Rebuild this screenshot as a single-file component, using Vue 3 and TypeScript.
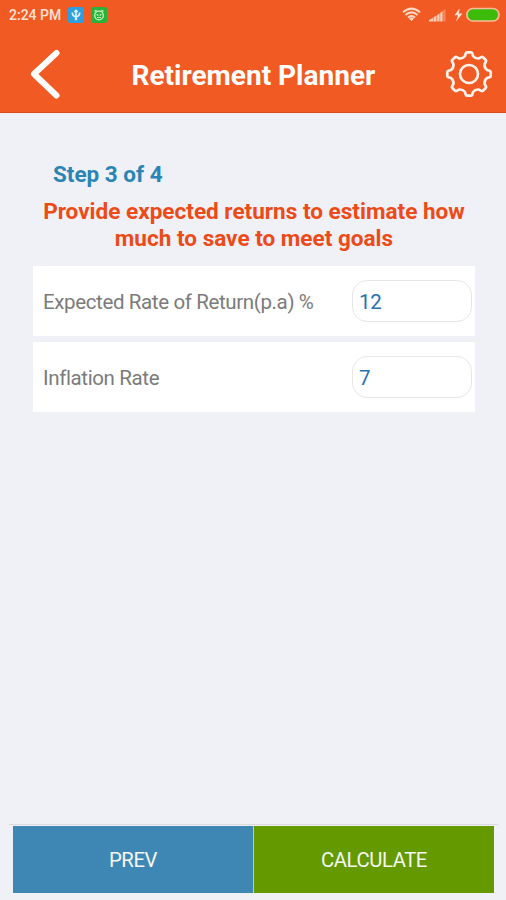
<script setup lang="ts">
import { ref } from 'vue'

interface Field {
  id: string
  label: string
  value: string
}

const fields = ref<Field[]>([
  { id: 'return', label: 'Expected Rate of Return(p.a) %', value: '12' },
  { id: 'inflation', label: 'Inflation Rate', value: '7' },
])

function point(x: number, y: number, turn: number): string {
  const a = (turn * Math.PI) / 4
  const px = x * Math.cos(a) - y * Math.sin(a)
  const py = x * Math.sin(a) + y * Math.cos(a)
  return `${px.toFixed(2)} ${py.toFixed(2)}`
}

// Outline of an eight-toothed cog centred on the origin
const gearPath =
  Array.from({ length: 8 }, (_, i) =>
    [
      `${i ? 'L' : 'M'}${point(-4, -18, i)}`,
      `L${point(-3.3, -20.6, i)}`,
      `Q${point(-3, -21.7, i)} ${point(-2, -21.7, i)}`,
      `L${point(2, -21.7, i)}`,
      `Q${point(3, -21.7, i)} ${point(3.3, -20.6, i)}`,
      `L${point(4, -18, i)}`,
      `Q${point(6.2, -15.2, i)} ${point(-4, -18, i + 1)}`,
    ].join(' '),
  ).join(' ') + 'Z'
</script>

<template>
  <div class="screen">
    <header class="top">
      <div class="status">
        <span class="time">2:24 PM</span>
        <svg class="badge" viewBox="0 0 16 16">
          <rect width="16" height="16" rx="2.5" fill="#2b9fe0" />
          <path d="M4.300 5.500Q4.300 9 8 10Q11.700 9 11.700 5.500M8 12.500V4.500M6.300 5L8 3.400 9.700 5" fill="none" stroke="#dff2ff" stroke-width="1.700" />
          <circle cx="8" cy="12" r="1.300" fill="#e9f6ff" />
        </svg>
        <svg class="badge second" viewBox="0 0 16 16">
          <rect width="16" height="16" rx="2.5" fill="#27b33a" />
          <circle cx="8" cy="8.500" r="4.300" fill="none" stroke="#c8f3bd" stroke-width="1.300" />
          <path d="M3.500 4.500L5.500 3M12.500 4.500L10.500 3M5.700 7.200l1.600 1.300M10.300 7.200L8.700 8.500M6 10.500h4" stroke="#c8f3bd" stroke-width="1.200" />
        </svg>
        <span class="grow"></span>
        <svg class="indicators" viewBox="0 0 100 18">
          <g fill="none" stroke="#ffd9c6" stroke-width="2">
            <path d="M3 6.200Q11.500 -1 20 6.200" />
            <path d="M5.500 9Q11.500 3.800 17.500 9" />
            <path d="M8 11.600Q11.500 8.600 15 11.600" />
          </g>
          <path d="M9 12.500Q11.500 10.800 14 12.500L11.500 15.200z" fill="#ffd9c6" />
          <g fill="#ffd0b8">
            <path d="M29 15.500v-1.500l4-2v3.500zM33.500 15.500v-4.200l3-1.700v5.900zM37.200 15.500V9.100l2.400-1.700v8.100zM40.200 15.500V6.900L42.600 5v10.500z" />
            <path d="M43.200 15.500V4.600L45.500 3v12.500z" opacity=".4" />
          </g>
          <path d="M59.500 2.500L54.500 9.200h3.500L56 15.500 62.500 7.500H59z" fill="#ffe0d0" />
          <rect x="66.900" y="2.500" width="32" height="12.500" rx="6" fill="#3dbb0b" stroke="#ffb998" stroke-width="1.700" />
        </svg>
      </div>
      <div class="bar">
        <button class="icon-btn back" aria-label="Back">
          <svg viewBox="0 0 32 52"><path d="M27.500 5L5 26 27.500 47.500" fill="none" stroke="#fff" stroke-width="6" stroke-linecap="round" stroke-linejoin="round" /></svg>
        </button>
        <h1>Retirement Planner</h1>
        <button class="icon-btn gear" aria-label="Settings">
          <svg viewBox="-24 -24 48 48">
            <g fill="none" stroke="#fff2ec" stroke-width="2.700" stroke-linejoin="round">
              <path :d="gearPath" />
              <circle r="9" />
            </g>
          </svg>
        </button>
      </div>
    </header>

    <main>
      <p class="step">Step 3 of 4</p>
      <h2><span class="line">Provide expected returns to estimate how</span> <span class="line">much to save to meet goals</span></h2>
      <label v-for="field in fields" :key="field.id" class="row">
        <span class="label">{{ field.label }}</span>
        <input v-model="field.value" type="text" inputmode="decimal" />
      </label>
    </main>

    <footer>
      <button class="prev">PREV</button>
      <button class="calc">CALCULATE</button>
    </footer>
  </div>
</template>

<style>
body {
  margin: 0;
  background: #f0f0f7;
}
</style>

<style scoped>
.screen {
  box-sizing: border-box;
  width: 506px;
  height: 900px;
  display: flex;
  flex-direction: column;
  background: #f0f0f7;
  font-family: Roboto, "Liberation Sans", sans-serif;
  overflow: hidden;
}
.top {
  box-sizing: border-box;
  height: 113px;
  flex: none;
  background: #f15a22;
  border-bottom: 1px solid #d94a1b;
}
.status {
  height: 30px;
  display: flex;
  align-items: center;
  padding: 0 6px 0 9px;
}
.time {
  font-size: 14px;
  font-weight: 500;
  line-height: 30px;
  color: #ffe3d6;
  width: 59px;
  white-space: nowrap;
}
.badge {
  width: 16px;
  height: 16px;
}
.badge.second {
  margin-left: 7px;
}
.grow {
  flex: 1;
}
.indicators {
  width: 100px;
  height: 18px;
  margin-top: -1px;
}
.bar {
  height: 82px;
  display: flex;
  align-items: center;
  padding: 5px 13px 0 29px;
  box-sizing: border-box;
}
.icon-btn {
  display: block;
  padding: 0;
  border: 0;
  background: none;
}
.icon-btn svg {
  display: block;
}
.back svg {
  width: 32px;
  height: 52px;
}
.gear {
  margin-left: auto;
}
.gear svg {
  width: 48px;
  height: 48px;
}
h1 {
  margin: 4px 0 0 70.5px;
  font-size: 28px;
  line-height: 34px;
  font-weight: 700;
  color: #fff;
  white-space: nowrap;
}
main {
  flex: 1;
  padding: 47px 31px 0 33px;
}
.step {
  margin: 0 0 10px 20px;
  font-size: 22.5px;
  line-height: 28px;
  font-weight: 700;
  color: #2985b4;
}
h2 {
  margin: 0 0 14px;
  text-align: center;
  font-size: 22.55px;
  line-height: 27px;
  font-weight: 700;
  color: #ec4b18;
}
.line {
  display: block;
  white-space: nowrap;
}
.row {
  box-sizing: border-box;
  height: 70px;
  display: flex;
  align-items: center;
  justify-content: space-between;
  padding: 0 3px 0 10px;
  background: #fff;
}
.row + .row {
  margin-top: 6px;
}
.label {
  padding-top: 2px;
  font-size: 20.5px;
  letter-spacing: -0.37px;
  line-height: 26px;
  color: #7b7b7b;
  white-space: nowrap;
}
input {
  box-sizing: border-box;
  width: 120px;
  height: 42px;
  padding: 2px 6px 0;
  border: 1.5px solid #e7e7e9;
  border-radius: 15px;
  background: #fff;
  color: #2672ae;
  font: 20.5px Roboto, "Liberation Sans", sans-serif;
  letter-spacing: -0.3px;
  outline: none;
}
footer {
  box-sizing: border-box;
  display: flex;
  gap: 1px;
  height: 76px;
  margin: 0 8px 0 9px;
  padding: 1px 4px 7px;
  border-top: 1px solid #d9d9de;
  background: linear-gradient(#c3c8c8, #c3c8c8) 244px 1px / 1px 67px no-repeat;
}
footer button {
  flex: 1;
  padding: 0;
  border: 0;
  color: #f4f8f4;
  font: 20.3px/68px Roboto, "Liberation Sans", sans-serif;
  letter-spacing: -0.42px;
}
.prev {
  background: #3e87b5;
}
.calc {
  background: #659900;
}
</style>
